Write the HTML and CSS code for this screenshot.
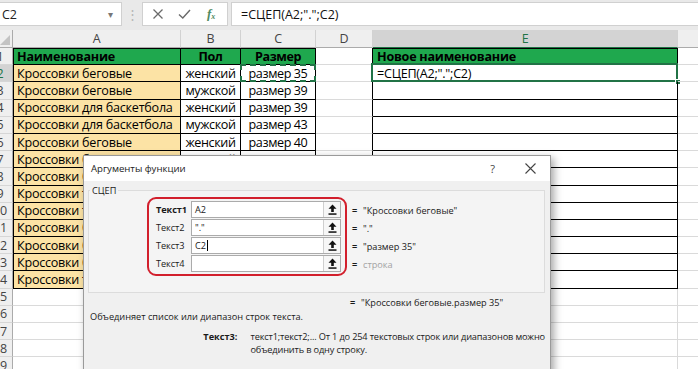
FILE: index.html
```html
<!DOCTYPE html>
<html lang="ru">
<head>
<meta charset="utf-8">
<title>Excel СЦЕП</title>
<link rel="stylesheet" href="styles.css">
</head>
<body>
<div class="app">
  <div class="fbar">
    <div class="namebox"><span class="nb-text">C2</span><span class="nb-caret">&#9662;</span></div>
    <div class="fsep">&#8942;</div>
    <div class="fbtns">
      <svg class="ico" width="12" height="12" viewBox="0 0 12 12"><path d="M1.5 1.5 L10.5 10.5 M10.5 1.5 L1.5 10.5" stroke="#6a6a6a" stroke-width="1.3" fill="none"/></svg>
      <svg class="ico" width="13" height="12" viewBox="0 0 13 12"><path d="M1 6.5 L4.8 10 L12 2" stroke="#6a6a6a" stroke-width="1.4" fill="none"/></svg>
      <span class="fx">f<sub>x</sub></span>
    </div>
    <div class="finput">=СЦЕП(A2;".";C2)</div>
  </div>

  <div class="sheet">
    <div class="ch corner"><svg width="10" height="10" viewBox="0 0 10 10"><path d="M10 0 L10 10 L0 10 Z" fill="#c3c3c3"/></svg></div>
    <div class="ch">A</div><div class="ch">B</div><div class="ch">C</div><div class="ch">D</div><div class="ch act">E</div><div class="ch"></div>

    <div class="rh">1</div>
    <div class="c g b tl tt bold">Наименование</div><div class="c g b tt bold ctr">Пол</div><div class="c g b tt bold ctr">Размер</div><div class="c dl"></div><div class="c g b tt bold">Новое наименование</div><div class="c"></div>

    <div class="rh act">2</div>
    <div class="c o b tl">Кроссовки беговые</div><div class="c b ctr">женский</div><div class="c b ctr ants-cell">размер 35<span class="ants"></span></div><div class="c dl"></div><div class="c b sel-cell">=СЦЕП(A2;".";C2)<span class="sel"></span><span class="handle"></span></div><div class="c"></div>

    <div class="rh">3</div>
    <div class="c o b tl">Кроссовки беговые</div><div class="c b ctr">мужской</div><div class="c b ctr">размер 39</div><div class="c dl"></div><div class="c b"></div><div class="c"></div>

    <div class="rh">4</div>
    <div class="c o b tl">Кроссовки для баскетбола</div><div class="c b ctr">женский</div><div class="c b ctr">размер 39</div><div class="c dl"></div><div class="c b"></div><div class="c"></div>

    <div class="rh">5</div>
    <div class="c o b tl">Кроссовки для баскетбола</div><div class="c b ctr">мужской</div><div class="c b ctr">размер 43</div><div class="c dl"></div><div class="c b"></div><div class="c"></div>

    <div class="rh">6</div>
    <div class="c o b tl">Кроссовки беговые</div><div class="c b ctr">женский</div><div class="c b ctr">размер 40</div><div class="c dl"></div><div class="c b"></div><div class="c"></div>

    <div class="rh">7</div>
    <div class="c o b tl">Кроссовки беговые</div><div class="c b ctr">мужской</div><div class="c b ctr">размер 41</div><div class="c dl"></div><div class="c b"></div><div class="c"></div>

    <div class="rh">8</div>
    <div class="c o b tl">Кроссовки беговые</div><div class="c b ctr">женский</div><div class="c b ctr">размер 37</div><div class="c dl"></div><div class="c b"></div><div class="c"></div>

    <div class="rh">9</div>
    <div class="c o b tl">Кроссовки теннисные</div><div class="c b ctr">мужской</div><div class="c b ctr">размер 42</div><div class="c dl"></div><div class="c b"></div><div class="c"></div>

    <div class="rh">10</div>
    <div class="c o b tl">Кроссовки теннисные</div><div class="c b ctr">женский</div><div class="c b ctr">размер 38</div><div class="c dl"></div><div class="c b"></div><div class="c"></div>

    <div class="rh">11</div>
    <div class="c o b tl">Кроссовки беговые</div><div class="c b ctr">мужской</div><div class="c b ctr">размер 44</div><div class="c dl"></div><div class="c b"></div><div class="c"></div>

    <div class="rh">12</div>
    <div class="c o b tl">Кроссовки беговые</div><div class="c b ctr">женский</div><div class="c b ctr">размер 36</div><div class="c dl"></div><div class="c b"></div><div class="c"></div>

    <div class="rh">13</div>
    <div class="c o b tl">Кроссовки беговые</div><div class="c b ctr">мужской</div><div class="c b ctr">размер 42</div><div class="c dl"></div><div class="c b"></div><div class="c"></div>

    <div class="rh">14</div>
    <div class="c o b tl">Кроссовки теннисные</div><div class="c b ctr">женский</div><div class="c b ctr">размер 37</div><div class="c dl"></div><div class="c b"></div><div class="c"></div>

    <div class="rh">15</div><div class="c"></div><div class="c"></div><div class="c"></div><div class="c"></div><div class="c"></div><div class="c"></div>
    <div class="rh">16</div><div class="c"></div><div class="c"></div><div class="c"></div><div class="c"></div><div class="c"></div><div class="c"></div>
    <div class="rh">17</div><div class="c"></div><div class="c"></div><div class="c"></div><div class="c"></div><div class="c"></div><div class="c"></div>
    <div class="rh">18</div><div class="c"></div><div class="c"></div><div class="c"></div><div class="c"></div><div class="c"></div><div class="c"></div>
    <div class="rh">19</div><div class="c"></div><div class="c"></div><div class="c"></div><div class="c"></div><div class="c"></div><div class="c"></div>
  </div>

  <div class="dialog">
    <div class="dtitle">
      <span class="dt-text">Аргументы функции</span>
      <span class="dt-help">?</span>
      <svg class="dt-close" width="11" height="11" viewBox="0 0 11 11"><path d="M0.5 0.5 L10.5 10.5 M10.5 0.5 L0.5 10.5" stroke="#444" stroke-width="1.1" fill="none"/></svg>
    </div>
    <div class="dbody">
      <fieldset class="group">
        <legend>СЦЕП</legend>
        <div class="group-inner">
          <div class="args">
            <div class="arg"><span class="alabel bold">Текст1</span><div class="ainput"><span class="aval">A2</span><span class="abtn"><svg width="9" height="11" viewBox="0 0 9 11"><path d="M4.5 0.5 L8.5 4.8 L5.8 4.8 L5.8 8 L3.2 8 L3.2 4.8 L0.5 4.8 Z" fill="#111"/><rect x="0.5" y="9.3" width="8" height="1.5" fill="#111"/></svg></span></div></div>
            <div class="arg"><span class="alabel">Текст2</span><div class="ainput"><span class="aval">"."</span><span class="abtn"><svg width="9" height="11" viewBox="0 0 9 11"><path d="M4.5 0.5 L8.5 4.8 L5.8 4.8 L5.8 8 L3.2 8 L3.2 4.8 L0.5 4.8 Z" fill="#111"/><rect x="0.5" y="9.3" width="8" height="1.5" fill="#111"/></svg></span></div></div>
            <div class="arg"><span class="alabel">Текст3</span><div class="ainput"><span class="aval">C2<span class="caret"></span></span><span class="abtn"><svg width="9" height="11" viewBox="0 0 9 11"><path d="M4.5 0.5 L8.5 4.8 L5.8 4.8 L5.8 8 L3.2 8 L3.2 4.8 L0.5 4.8 Z" fill="#111"/><rect x="0.5" y="9.3" width="8" height="1.5" fill="#111"/></svg></span></div></div>
            <div class="arg"><span class="alabel">Текст4</span><div class="ainput"><span class="aval"></span><span class="abtn"><svg width="9" height="11" viewBox="0 0 9 11"><path d="M4.5 0.5 L8.5 4.8 L5.8 4.8 L5.8 8 L3.2 8 L3.2 4.8 L0.5 4.8 Z" fill="#111"/><rect x="0.5" y="9.3" width="8" height="1.5" fill="#111"/></svg></span></div></div>
          </div>
          <div class="results">
            <div class="res"><span class="eq">=</span><span>"Кроссовки беговые"</span></div>
            <div class="res"><span class="eq">=</span><span>"."</span></div>
            <div class="res"><span class="eq">=</span><span>"размер 35"</span></div>
            <div class="res"><span class="eq">=</span><span class="muted">строка</span></div>
          </div>
        </div>
      </fieldset>
      <div class="total"><span class="eq">=</span><span>"Кроссовки беговые.размер 35"</span></div>
      <div class="desc">Объединяет список или диапазон строк текста.</div>
      <div class="help">
        <span class="hlabel bold">Текст3:</span>
        <span class="htext">текст1;текст2;... От 1 до 254 текстовых строк или диапазонов можно<br>объединить в одну строку.</span>
      </div>
    </div>
  </div>
</div>
</body>
</html>
```
FILE: styles.css
```css
* { box-sizing: border-box; }
html, body { margin: 0; padding: 0; }
body {
  width: 698px;
  height: 369px;
  overflow: hidden;
  background: #fff;
  font-family: "Open Sans", "Noto Sans", sans-serif;
  color: #000;
}
.app { position: relative; width: 698px; height: 369px; overflow: hidden; }
.bold { font-weight: 700; }

/* formula bar */
.fbar {
  display: flex;
  height: 30px;
  padding: 2px 0 4px 0;
  background: #e9e9e9;
  align-items: stretch;
}
.namebox {
  width: 122px;
  background: #fff;
  border: 1px solid #d0d0d0;
  border-left: none;
  display: flex;
  align-items: center;
  justify-content: space-between;
  padding: 0 8px 0 2px;
  font-size: 12.5px;
  color: #222;
}
.nb-caret { color: #777; font-size: 10px; }
.fsep {
  width: 20px;
  display: flex;
  align-items: center;
  justify-content: center;
  color: #b5b5b5;
  font-size: 13px;
}
.fbtns {
  width: 86px;
  background: #fff;
  border: 1px solid #d0d0d0;
  display: flex;
  align-items: center;
  padding-left: 9px;
  gap: 14px;
}
.fx {
  font-family: "Liberation Serif", serif;
  font-style: italic;
  font-size: 13px;
  color: #4f8a62;
  font-weight: 700;
  margin-left: 2px;
}
.fx sub { font-size: 8px; vertical-align: -1px; }
.finput {
  flex: 1;
  margin-left: 3px;
  background: #fff;
  border: 1px solid #d0d0d0;
  border-right: none;
  display: flex;
  align-items: center;
  padding-left: 9px;
  font-size: 12.5px;
  color: #111;
}

/* sheet */
.sheet {
  display: grid;
  margin-left: -12px;
  grid-template-columns: 25px 168px 60px 75px 57px 305px 40px;
  grid-template-rows: 18px repeat(19, 17.2px);
  font-size: 12.6px;
  letter-spacing: -0.25px;
}
.ch {
  background: #efefef;
  border-right: 1px solid #d2d2d2;
  border-bottom: 1px solid #ababab;
  display: flex;
  align-items: center;
  justify-content: center;
  color: #444;
  font-size: 12.5px;
}
.ch.act { background: #d3d3d3; color: #217346; border-bottom: 1px solid #217346; }
.corner { justify-content: flex-end; align-items: flex-end; padding: 0 2px 2px 0; border-right: 1px solid #ababab; }
.rh {
  background: #efefef;
  border-right: 1px solid #ababab;
  border-bottom: 1px solid #d6d6d6;
  display: flex;
  align-items: center;
  justify-content: center;
  color: #444;
  font-size: 12.5px;
  letter-spacing: 0;
}
.rh.act { background: #d3d3d3; color: #217346; }
.c {
  position: relative;
  border-right: 1px solid #dadada;
  border-bottom: 1px solid #dadada;
  display: flex;
  align-items: center;
  padding: 0 3px 0 4px;
  white-space: nowrap;
  overflow: visible;
}
.c.b { border-right-color: #000; border-bottom-color: #000; }
.c.dl { border-right-color: #000; }
.c.tl { box-shadow: inset 1px 0 0 #000; }
.c.tt { box-shadow: inset 0 1px 0 #000; }
.c.tl.tt { box-shadow: inset 1px 0 0 #000, inset 0 1px 0 #000; }
.c.ctr { justify-content: center; padding: 0; letter-spacing: -0.4px; }
.c.g { background: #1fa84e; }
.c.o { background: #fce3a5; }
.sel {
  position: absolute;
  left: -2px; top: -2px; right: -1px; bottom: -1px;
  border: 2px solid #217346;
}
.handle {
  position: absolute;
  right: -4px; bottom: -4px;
  width: 6px; height: 6px;
  background: #217346;
  border: 1px solid #fff;
}
.ants {
  position: absolute;
  left: -1px; top: -1px; right: -1px; bottom: -1px;
  border: 2px dashed #217346;
}

/* dialog */
.dialog {
  position: absolute;
  left: 83px;
  top: 155px;
  width: 468px;
  height: 240px;
  background: #f0f0f0;
  border: 1px solid #9a9a9a;
  box-shadow: 3px 3px 8px rgba(0,0,0,0.35);
  font-size: 9.2px;
  color: #1a1a1a;
}
.dtitle {
  height: 25px;
  background: #fff;
  display: flex;
  align-items: center;
  padding-left: 7px;
}
.dt-text { flex: 1; font-size: 9.6px; color: #222; }
.dt-help { margin-right: 30px; font-size: 11px; color: #444; }
.dt-close { margin-right: 14px; }
.dbody { padding: 3px 5px 0 4px; }
.group {
  margin: 0;
  padding: 0;
  border: 1px solid #dcdcdc;
  background: #f4f4f4;
  height: 109px;
}
.group legend {
  padding: 0 2px;
  margin-left: 1px;
  font-size: 9.2px;
  line-height: 13px;
  color: #1a1a1a;
}
.group-inner { display: flex; align-items: flex-start; padding-left: 58px; }
.args {
  width: 200px;
  border: 2.5px solid #d21f2c;
  border-radius: 9px;
  padding: 2px 4px 2px 7px;
  display: flex;
  flex-direction: column;
  gap: 1px;
}
.arg { display: flex; align-items: center; height: 17px; }
.alabel { width: 35px; white-space: nowrap; letter-spacing: -0.1px; }
.ainput {
  flex: 1;
  height: 17px;
  background: #fff;
  border: 1px solid #ababab;
  display: flex;
  align-items: stretch;
}
.aval { flex: 1; padding-left: 3px; display: flex; align-items: center; }
.caret { display: inline-block; width: 1px; height: 11px; background: #000; margin-left: 1px; }
.abtn {
  width: 17px;
  border-left: 1px solid #cfcfcf;
  background: #f7f7f7;
  display: flex;
  align-items: center;
  justify-content: center;
}
.results { margin-left: 5px; padding-top: 4.5px; display: flex; flex-direction: column; gap: 1px; }
.res { height: 17px; display: flex; align-items: center; }
.eq { width: 11px; font-weight: 700; }
.muted { color: #a3a3a3; }
.total { display: flex; padding-left: 262px; margin-top: 2px; height: 15px; align-items: center; }
.desc { padding-left: 2px; height: 13px; display: flex; align-items: center; }
.help { display: flex; margin-top: 7px; line-height: 13px; }
.hlabel { width: 186px; text-align: right; }
.htext { margin-left: 13px; white-space: nowrap; letter-spacing: -0.15px; }
```
